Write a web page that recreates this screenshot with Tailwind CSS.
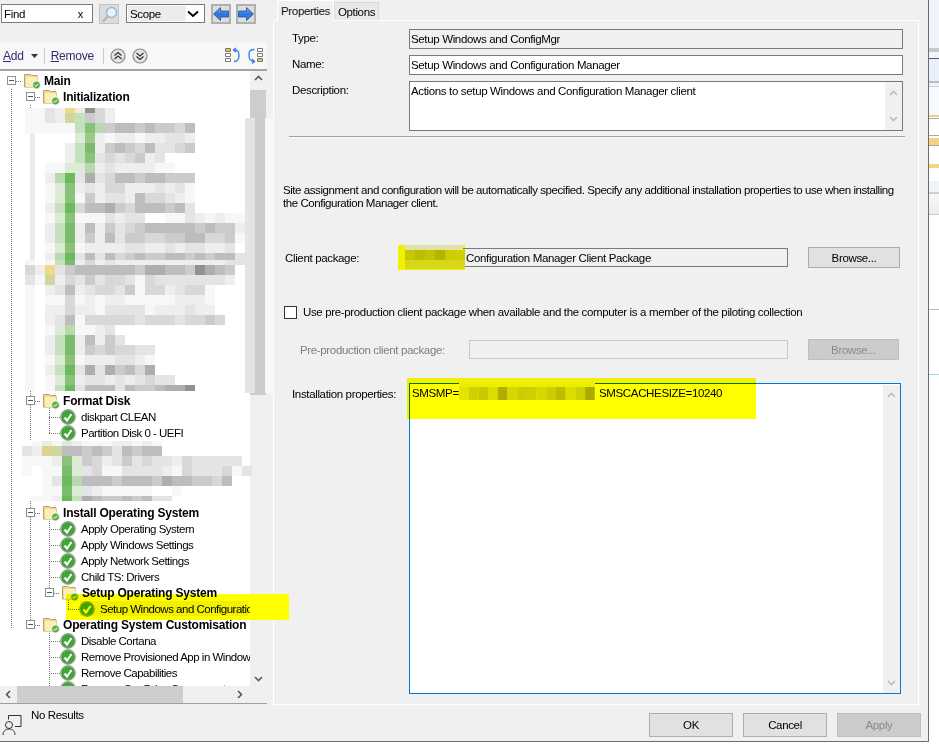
<!DOCTYPE html>
<html lang="en">
<head>
<meta charset="UTF-8">
<title>Task Sequence Editor</title>
<script src="https://cdn.jsdelivr.net/npm/@tailwindcss/browser@4"></script>
</head>
<body class="bg-white overflow-hidden">
<div class="relative flex w-[939px] h-[747px] overflow-hidden font-['Liberation_Sans',Arial,sans-serif] text-[11.5px] leading-[16px] text-black tracking-[-0.35px]">

  <!-- dialog -->
  <div class="flex flex-col w-[929px] h-[742px] bg-[#f0f0f0] border-b border-r border-[#6d6d6d]">
    <div class="flex flex-1 min-h-0">

      <!-- left pane -->
      <div class="flex flex-col w-[267px] shrink-0">
        <div class="flex items-start gap-[6px] h-[42px] pt-[4px] pl-[1px]">
          <div class="flex items-center justify-between w-[92px] h-[19px] bg-white border border-[#7a7a7a] pl-[2px] pr-[9px]"><span>Find</span><span class="text-[11px]">x</span></div>
          <div class="flex items-center justify-center w-[20px] h-[20px] bg-[#dcdcdc] border border-[#c4c4c4]">
            <svg width="17" height="17" viewBox="0 0 17 17"><circle cx="10.500" cy="6.500" r="5" fill="#e6f1fa" stroke="#9fb8cc" stroke-width="1.500"/><path d="M6.500 10.500 2.500 15" stroke="#c2b9a2" stroke-width="2.600" stroke-linecap="round"/></svg>
          </div>
          <div class="flex items-center justify-between w-[79px] h-[19px] ml-px bg-white border border-[#7a7a7a] pr-[5px]">
            <span class="flex items-center h-[15px] w-[58px] ml-[1px] pl-[2px] bg-[#ececec]">Scope</span>
            <svg width="12" height="8" viewBox="0 0 12 8"><path d="M1 1.500 6 6l5-4.500" fill="none" stroke="#000" stroke-width="2"/></svg>
          </div>
          <div class="flex items-center justify-center w-[20px] h-[20px] bg-[#dcdcdc] border-2 border-[#b0b0b0]">
            <svg width="16" height="14" viewBox="0 0 16 14"><defs><linearGradient id="arrowBlue" x1="0" y1="0" x2="0" y2="1"><stop offset="0" stop-color="#7fb2f0"/><stop offset=".5" stop-color="#2f74dc"/><stop offset="1" stop-color="#3f86e4"/></linearGradient></defs><path d="M.5 7 7.500.5V4h8v6h-8v3.500z" fill="url(#arrowBlue)" stroke="#1c4f9c" stroke-width=".8"/></svg>
          </div>
          <div class="flex items-center justify-center w-[20px] h-[20px] -ml-px bg-[#dcdcdc] border-2 border-[#b0b0b0]">
            <svg width="16" height="14" viewBox="0 0 16 14"><path d="M15.500 7 8.500.5V4h-8v6h8v3.500z" fill="url(#arrowBlue)" stroke="#1c4f9c" stroke-width=".8"/></svg>
          </div>
        </div>

        <div class="flex items-center h-[29px] bg-[#f6f7f8] pl-[3px] pr-[4px] border-b-2 border-[#a3a3a3] text-[#3b2a6b] text-[12px] tracking-[-0.25px]">
          <span><span class="underline">A</span>dd</span>
          <svg class="ml-[7px]" width="7" height="4" viewBox="0 0 7 4"><path d="M0 0h7L3.500 4z" fill="#333"/></svg>
          <div class="w-px h-[16px] bg-[#c8c8c8] ml-[6px]"></div>
          <span class="ml-[6px]"><span class="underline">R</span>emove</span>
          <div class="w-px h-[16px] bg-[#c8c8c8] ml-[9px]"></div>
          <svg class="ml-[6px]" width="16" height="16" viewBox="0 0 16 16"><circle cx="8" cy="8" r="7" fill="#e4e4e4" stroke="#8a8a8a" stroke-width="1.200"/><path d="m4.500 7.500 3.500-3 3.500 3m-7 3.500 3.500-3 3.500 3" fill="none" stroke="#333" stroke-width="1.200"/></svg>
          <svg class="ml-[6px]" width="16" height="16" viewBox="0 0 16 16"><circle cx="8" cy="8" r="7" fill="#e4e4e4" stroke="#8a8a8a" stroke-width="1.200"/><path d="m4.500 5 3.500 3 3.500-3m-7 3.500 3.500 3 3.500-3" fill="none" stroke="#333" stroke-width="1.200"/></svg>
          <svg class="ml-auto" width="15" height="17" viewBox="0 0 15 17"><path d="M.5 1.500h5v3h-5z" fill="#f3c040" stroke="#777"/><path d="M.5 6.500h5v3h-5zM.5 11.500h5v3h-5z" fill="#fff" stroke="#777"/><path d="M8.500 3c4 0 5.500 1 5.500 5.500 0 4-1.200 6-5 6" fill="none" stroke="#2f80d8" stroke-width="1.300"/><path d="m11 1-2.500 2L11 5" fill="none" stroke="#2f80d8" stroke-width="1.300"/></svg>
          <svg class="ml-[8px]" width="15" height="17" viewBox="0 0 15 17"><path d="M9.500 1.500h5v3h-5zM9.500 6.500h5v3h-5z" fill="#fff" stroke="#777"/><path d="M9.500 11.500h5v3h-5z" fill="#f3c040" stroke="#777"/><path d="M6.500 2.500C2 2.500 1 4 1 8c0 4 1 6.500 5.500 6.500" fill="none" stroke="#2f80d8" stroke-width="1.300"/><path d="m4 12 2.500 2.500L4 16.500" fill="none" stroke="#2f80d8" stroke-width="1.300"/></svg>
        </div>

        <!-- tree -->
        <div class="flex flex-1 min-h-0">
          <div id="tree" class="relative flex-1 min-w-0 bg-white overflow-hidden"></div>
          <div class="relative flex flex-col items-center w-[17px] bg-[#f0f0f0]">
            <svg class="mt-[4px]" width="9" height="6" viewBox="0 0 9 6"><path d="m1 5 3.500-3.500L8 5" fill="none" stroke="#5a5a5a" stroke-width="1.600"/></svg>
            <div class="w-[16px] h-[305px] mt-[9px] self-start bg-[#cdcdcd]"></div>
            <svg class="mt-auto mb-[4px]" width="9" height="6" viewBox="0 0 9 6"><path d="m1 1 3.500 3.500L8 1" fill="none" stroke="#5a5a5a" stroke-width="1.600"/></svg>
          </div>
        </div>
        <div class="flex items-center h-[17px] bg-[#f0f0f0] pr-[24px]">
          <svg class="ml-[5px]" width="6" height="9" viewBox="0 0 6 9"><path d="M5 1 1.500 4.500 5 8" fill="none" stroke="#505050" stroke-width="1.500"/></svg>
          <div class="w-[166px] h-[17px] ml-[6px] bg-[#cdcdcd]"></div>
          <svg class="ml-auto" width="6" height="9" viewBox="0 0 6 9"><path d="m1 1 3.500 3.500L1 8" fill="none" stroke="#505050" stroke-width="1.500"/></svg>
        </div>
        <div class="flex items-start h-[38px] border-t border-[#a0a0a0] pl-[2px] pt-[3px]">
          <svg class="mt-[7px]" width="20" height="22" viewBox="0 0 20 22"><path d="M6.500 1.500h12.500v11h-6" fill="none" stroke="#333"/><path d="M6.500 1.500v4" stroke="#333"/><circle cx="7" cy="11" r="3.500" fill="none" stroke="#333"/><path d="M1 21c0-4 2.500-6 6-6s6 2 6 6" fill="none" stroke="#333"/></svg>
          <span class="ml-[9px]">No Results</span>
        </div>
      </div>

      <!-- right pane -->
      <div class="flex flex-col flex-1 min-w-0 pl-[6px] pr-[9px]">
        <div class="flex items-end h-[20px] pl-[4px]">
          <div class="relative z-10 flex items-center justify-center w-[57px] h-[21px] -mb-px bg-[#f0f0f0] border border-b-0 border-white text-[#111]">Properties</div>
          <div class="flex items-center justify-center w-[45px] h-[18px] bg-[#e9e9e9] border border-b-0 border-[#dadada]">Options</div>
        </div>
        <div class="flex flex-col h-[685px] border border-white pl-[15px] pr-[7px] pt-[8px] pb-[10px]">
          <div class="flex h-[20px]">
            <span class="w-[120px] pt-[1px] pl-[3px]">Type:</span>
            <div class="flex items-center w-[494px] bg-[#f0f0f0] border border-[#7a7a7a] pl-[1px]">Setup Windows and ConfigMgr</div>
          </div>
          <div class="flex h-[20px] mt-[6px]">
            <span class="w-[120px] pt-[1px] pl-[3px]">Name:</span>
            <div class="flex items-center w-[494px] bg-white border border-[#7a7a7a] pl-[1px]">Setup Windows and Configuration Manager</div>
          </div>
          <div class="flex h-[50px] mt-[6px]">
            <span class="w-[120px] pt-[1px] pl-[3px]">Description:</span>
            <div class="flex justify-between w-[494px] bg-white border border-[#7a7a7a] pl-[1px] pt-[1px]">
              <span>Actions to setup Windows and Configuration Manager client</span>
              <div class="flex flex-col items-center justify-between w-[17px] -mt-px py-[8px] bg-[#f0f0f0]">
                <svg width="9" height="6" viewBox="0 0 9 6"><path d="m1 5 3.500-3.500L8 5" fill="none" stroke="#bcbcbc" stroke-width="1.600"/></svg>
                <svg width="9" height="6" viewBox="0 0 9 6"><path d="m1 1 3.500 3.500L8 1" fill="none" stroke="#bcbcbc" stroke-width="1.600"/></svg>
              </div>
            </div>
          </div>
          <div class="h-[2px] w-[616px] mt-[5px] bg-[#a0a0a0] border-b border-white"></div>

          <p class="mt-[46px] w-[625px] -ml-[6px] leading-[13px] tracking-[-0.44px]">Site assignment and configuration will be automatically specified. Specify any additional installation properties to use when installing the Configuration Manager client.</p>

          <div class="flex items-center h-[21px] mt-[37px] -ml-[4px]">
            <span class="w-[120px]">Client package:</span>
            <div class="flex items-center w-[383px] h-[19px] border border-[#7a7a7a] pl-[60px]">Configuration Manager Client Package</div>
            <div class="flex items-center justify-center w-[92px] h-[21px] ml-[20px] bg-[#e1e1e1] border border-[#adadad]">Browse...</div>
          </div>

          <div class="flex items-center h-[14px] mt-[37px] -ml-[5px]">
            <div class="w-[13px] h-[13px] bg-white border border-[#333]"></div>
            <span class="ml-[6px]">Use pre-production client package when available and the computer is a member of the piloting collection</span>
          </div>

          <div class="flex items-center h-[21px] mt-[20px] -ml-[4px]">
            <span class="w-[184px] pl-[15px] text-[#7d7d7d]">Pre-production client package:</span>
            <div class="w-[319px] h-[19px] border border-[#c8c8c8]"></div>
            <div class="flex items-center justify-center w-[91px] h-[21px] ml-[20px] bg-[#cccccc] border border-[#bfbfbf] text-[#8a8a8a]">Browse...</div>
          </div>

          <div class="flex flex-1 min-h-0 mt-[23px]">
            <span class="w-[120px] pt-[3px] pl-[3px]">Installation properties:</span>
            <div class="flex justify-between w-[492px] bg-white border border-[#0078d7] pl-[2px] pt-[1px]">
              <div class="flex"><span class="w-[187px]">SMSMP=</span><span>SMSCACHESIZE=10240</span></div>
              <div class="flex flex-col items-center justify-between w-[17px] py-[7px] bg-[#f0f0f0]">
                <svg width="9" height="6" viewBox="0 0 9 6"><path d="m1 5 3.500-3.500L8 5" fill="none" stroke="#bcbcbc" stroke-width="1.600"/></svg>
                <svg width="9" height="6" viewBox="0 0 9 6"><path d="m1 1 3.500 3.500L8 1" fill="none" stroke="#bcbcbc" stroke-width="1.600"/></svg>
              </div>
            </div>
          </div>
        </div>
        <div class="flex justify-end gap-[10px] mt-[8px] -mr-[2px]">
          <div class="flex items-center justify-center w-[84px] h-[24px] bg-[#e1e1e1] border border-[#adadad]">OK</div>
          <div class="flex items-center justify-center w-[84px] h-[24px] bg-[#e1e1e1] border border-[#adadad]">Cancel</div>
          <div class="flex items-center justify-center w-[84px] h-[24px] bg-[#cccccc] border border-[#bfbfbf] text-[#8a8a8a]">Apply</div>
        </div>
      </div>
    </div>
  </div>

  <!-- window behind -->
  <div class="flex flex-col flex-1 h-[747px] bg-white">
    <div class="h-[48px] bg-[#f0f4fa]"></div>
    <div class="h-[4px] bg-[#c4c8cc]"></div>
    <div class="h-[6px] bg-[#f0f4fa]"></div>
    <div class="h-px bg-[#555a66]"></div>
    <div class="h-[22px] bg-[#e8f0fa]"></div>
    <div class="h-[2px] bg-[#b4bcc4]"></div>
    <div class="h-[3px] bg-[#eef2f6]"></div>
    <div class="h-px bg-[#d0d4d8]"></div>
    <div class="h-[28px] bg-[#f6f9fe]"></div>
    <div class="h-[2px] bg-[#f0cf78]"></div>
    <div class="h-px"></div>
    <div class="h-px bg-[#a8a8a8]"></div>
    <div class="h-[16px]"></div>
    <div class="h-px bg-[#a8a8a8]"></div>
    <div class="h-[2px]"></div>
    <div class="h-[7px] bg-[#f3d480]"></div>
    <div class="h-px bg-[#a8a8a8]"></div>
    <div class="h-[18px]"></div>
    <div class="h-[4px] bg-[#f3d480]"></div>
    <div class="h-[13px]"></div>
    <div class="h-[11px] bg-[#eff4f9]"></div>
    <div class="h-[2px] bg-[#cfcfcf]"></div>
    <div class="h-[20px] bg-gradient-to-b from-[#f8f8f8] to-[#ececec]"></div>
    <div class="h-px bg-[#c8c8c8]"></div>
    <div class="h-[94px]"></div>
    <div class="h-px bg-[#bbbbbb]"></div>
    <div class="h-[64px]"></div>
    <div class="h-px bg-[#a8d4ec]"></div>
  </div>

  <!-- redaction overlays -->
  <svg id="mosaic" class="absolute left-0 top-0 pointer-events-none" width="939" height="747"></svg>
</div>

<script>
  // tree rows: [indent level, label, type, top]
  const rows = [
    [0, 'Main', 'group', 73], [1, 'Initialization', 'group', 89],
    [1, 'Format Disk', 'group', 393], [1, 'diskpart CLEAN', 'step', 409], [1, 'Partition Disk 0 - UEFI', 'step', 425],
    [1, 'Install Operating System', 'group', 505], [1, 'Apply Operating System', 'step', 521], [1, 'Apply Windows Settings', 'step', 537],
    [1, 'Apply Network Settings', 'step', 553], [1, 'Child TS: Drivers', 'step', 569], [2, 'Setup Operating System', 'group', 585],
    [2, 'Setup Windows and Configuration Manager', 'step', 601], [1, 'Operating System Customisation', 'group', 617],
    [1, 'Disable Cortana', 'step', 633], [1, 'Remove Provisioned App in Windows', 'step', 649], [1, 'Remove Capabilities', 'step', 665],
    [1, 'Remove OneDrive Components', 'step', 681]
  ];
  const treeEl = document.getElementById('tree');
  const treeTop = 71;
  // dotted guides
  const dot = (x, y, w, h) => `<div style="left:${x}px;top:${y - treeTop}px;width:${w}px;height:${h}px;background-image:repeating-linear-gradient(${w > 1 ? '90deg' : '0deg'},#777 0 1px,transparent 1px 2px)" class="absolute"></div>`;
  let html = '<div class="absolute left-[80px] top-[530px] w-[168px] h-[15px] bg-[#f0f0f0]"></div>';
  html += dot(11, 88, 1, 540);
  html += dot(30, 104, 1, 522);
  html += dot(49, 408, 1, 25) + dot(49, 520, 1, 70) + dot(49, 632, 1, 56) + dot(68, 598, 1, 11);
  rows.forEach(([lvl, label, type, y]) => {
    const x = 11 + lvl * 19;
    const top = y - treeTop;
    if (type === 'group') {
      html += dot(x + 5, y + 8, 6, 1);
      html += `<div class="absolute flex items-center justify-center bg-white border border-[#8f8f8f] w-[9px] h-[9px]" style="left:${x - 4}px;top:${top + 3}px"><div class="w-[5px] h-px bg-[#3a5a8a]"></div></div>`;
      html += `<svg class="absolute" style="left:${x + 12}px;top:${top - 2}px" width="20" height="20" viewBox="0 0 20 20"><path d="M1.500 3.500h6l1 1h5.500v11.500h-12.500z" fill="#f3d98b" stroke="#b8a268"/><path d="M3 6h11v10H3z" fill="#fbeeb9"/><circle cx="13.500" cy="14" r="4" fill="#5fae45" stroke="#fff" stroke-width=".8"/><path d="m11.700 14 1.300 1.300 2.300-2.500" fill="none" stroke="#fff" stroke-width="1"/></svg>`;
      html += `<span class="absolute font-bold whitespace-nowrap text-[12px] tracking-[-0.2px]" style="left:${x + 33}px;top:${top}px">${label}</span>`;
    } else {
      html += dot(x + 19, y + 8, 11, 1);
      html += `<svg class="absolute" style="left:${x + 30}px;top:${top}px" width="16" height="16" viewBox="0 0 16 16"><circle cx="8" cy="8" r="7.300" fill="#3fa535" stroke="#a8a8a8" stroke-width="1.300"/><path d="m4.500 8.500 2.500 3 4.500-6.500" fill="none" stroke="#fff" stroke-width="2"/></svg>`;
      html += `<span class="absolute whitespace-nowrap tracking-[-0.5px]" style="left:${x + 51}px;top:${top}px">${label}</span>`;
    }
  });
  treeEl.innerHTML = html;

  // pixelated redaction blocks
  const pal = {'.':null,'0':'#ffffff','1':'#f7f7f7','2':'#eeeeee','3':'#e4e4e6','4':'#d8d8da','5':'#cbcbce','6':'#bdbdc0','7':'#aeaeb0','8':'#949090',
    'y':'#ecd98a','Y':'#d8d590','z':'#cfd69e','t':'#f0ecd8','a':'#dcebd6','b':'#c5e0bd','c':'#b8d8ae','d':'#8ac27a','e':'#6cbb5a','f':'#7dbb6c','g':'#9cc98c'};
  const block1 = [
    [108,5,'1132yt842'], [113,10,'1132zb542'],
    [123,10,'11111bdc566565546'], [133,10,'00000ag2122122332'],
    [143,10,'00002bf2565463345'], [153,10,'00002bd3434523'],
    [163,10,'0011aac23222211'], [173,10,'002ce373466566555'],
    [183,10,'001ad232442223231'], [193,10,'001ad152332644321'],
    [203,10,'002be466754666563'], [213,10,'001ad11132330011321211'],
    [223,10,'002bf26253456666656552'], [233,10,'002bf25263554455664451'],
    [243,10,'001ad12222332232332230'], [253,7,'002ce3636456556656566354'],
    [260,5,'101bf242322222222222333'], [265,10,'42y356666665776658765'],
    [275,10,'31z243534431433333332'], [285,10,'1023623443514423441'],
    [295,10,'1011412122111112221'], [305,10,'1022422133331222322'],
    [315,10,'10236144444344434454'], [325,10,'101ac1123'], [335,10,'102bf26253'],
    [345,10,'102bf25454433'], [355,10,'101ad12223321'], [365,10,'102be37375647'],
    [375,10,'101ad2332323433'], [385,6,'101be366636556778']
  ];
  const block2 = [
    [441,5,'01t1a211122121'], [446,10,'32Yz6656536566'],
    [456,10,'1112da5423534332433333'], [466,10,'1011fa34113333214333413'],
    [476,10,'0013ec666566657665546'], [486,10,'0011fa3211111001'],
    [496,5,'0112eb765565633']
  ];
  const svg = document.getElementById('mosaic');
  let out = '';
  const paint = (list, x0) => list.forEach(([y, h, s]) => {
    [...s].forEach((ch, i) => { if (pal[ch]) out += `<rect x="${x0 + i * 10}" y="${y}" width="10" height="${h}" fill="${pal[ch]}"/>`; });
  });
  paint(block1, 25);
  paint(block2, 22);
  // pale strip left by the smear where the tree guide ran
  out += '<rect x="30" y="133" width="5" height="127" fill="#eaeaea"/>';
  // yellow marker, multiplied so the text below stays readable
  const marker = (x, y, w, h) => `<rect x="${x}" y="${y}" width="${w}" height="${h}" fill="#ffff00" style="mix-blend-mode:multiply"/>`;
  out += marker(66, 594, 184, 26);
  out += '<rect x="250" y="594" width="39" height="26" fill="#ffff00"/>';
  out += marker(398, 245, 67, 25);
  out += marker(407, 378, 349, 41);
  // smeared client package name
  ['#c8c800','#bdbd00','#c4c400','#b5b500','#cccc00','#d0d000'].forEach((c, i) => { out += `<rect x="${405 + i * 10}" y="250" width="10" height="10" fill="${c}"/><rect x="${405 + i * 10}" y="260" width="10" height="9" fill="#d6d61a"/>`; });
  out += '<rect x="405" y="245" width="58" height="5" fill="#e3e3a8"/>';
  // smeared server name
  ['#e4e400','#d0d000','#c8c800','#dcdc00','#b0ae00','#d6d600','#cccc00','#cfcf00','#d8d800','#cccc00','#bcbc00','#dcdc00','#d0d000','#aaaa00'].forEach((c, i) => { out += `<rect x="${459 + i * 9.7}" y="387" width="9.7" height="13" fill="${c}"/>`; });
  out += '<rect x="459" y="383" width="136" height="4" fill="#e8f000"/>';
  // scrollbar smear
  out += '<rect x="245" y="118" width="10" height="275" fill="#e4e4e4"/><rect x="255" y="118" width="10" height="275" fill="#cbcbcb"/><rect x="265" y="118" width="8" height="275" fill="#f7f7f7"/>';
  svg.innerHTML = out;
</script>
</body>
</html>
